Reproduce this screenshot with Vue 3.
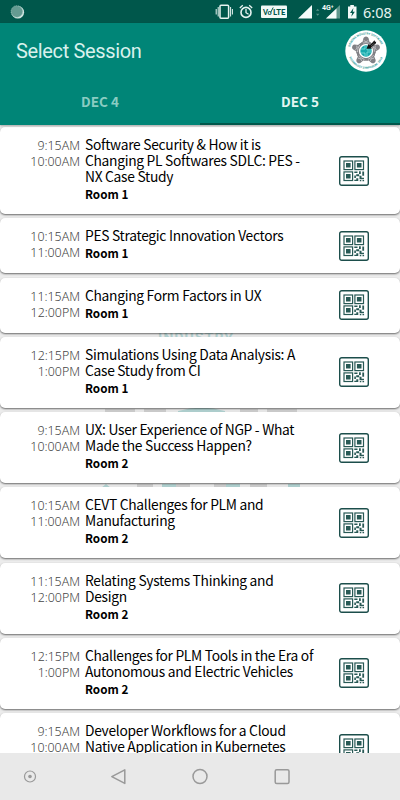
<template>
  <div class="screen">
    <div class="status-bar">
      <svg class="status-dot" width="16" height="16" viewBox="0 0 16 16">
        <circle cx="8.8" cy="8.3" r="6.3" fill="#d5e9e5" />
        <circle cx="7.9" cy="7.5" r="5.8" fill="#659b92" stroke="#9bc0b9" stroke-dasharray="1 1" />
      </svg>
      <svg class="status-icons" width="150" height="24" viewBox="210 0 150 24">
        <g fill="none" stroke="#e6f3f0">
          <rect x="220" y="5.2" width="8.6" height="13" rx="1" stroke-width="1.5" />
          <path d="M218.2 7v9.5M216.2 9v5.5M230.6 7v9.5M232.4 9v5.5" stroke-width="1" />
          <circle cx="246" cy="12.4" r="5" stroke-width="1.6" />
          <path d="M246 9v3.7l2.6 1.6M239.8 8.1l3-2.8M252.2 8.1l-3-2.8" stroke-width="1.3" />
        </g>
        <rect x="261" y="5.5" width="26" height="12.5" rx="1" fill="#f2f9f7" />
        <text x="263" y="14.8" class="volte" textLength="8.5" lengthAdjust="spacingAndGlyphs">Vo</text>
        <text x="273" y="14.8" class="volte" textLength="12.5" lengthAdjust="spacingAndGlyphs">LTE</text>
        <path d="M270.6 12.5l2.6-5" stroke="#00574b" stroke-width="1" />
        <path d="M312 5v13.5h-14z" fill="#f5fbfa" />
        <path d="M316 10.8l1.7-2 1.7 2zM316 13.7l1.7 2 1.7-2z" fill="#5a958b" />
        <path d="M340 5v13.5h-14z" fill="#5f978d" />
        <path d="M336.5 8.5v10H326z" fill="#f5fbfa" />
        <text x="322" y="9.5" class="network">4G⁺</text>
        <path d="M350.3 5h3.6v1.4h2.6v12H348v-12h2.3z" fill="#f2f9f7" />
        <path d="M353.4 8l-3.4 5h2.1l-.8 3.7 3.6-5h-2.2z" fill="#00574b" />
      </svg>
      <span class="clock">6:08</span>
    </div>

    <header class="app-bar">
      <div class="toolbar">
        <h1>Select Session</h1>
        <svg class="logo" width="42" height="42" viewBox="0 0 42 42">
          <defs>
            <path id="arcTop" d="M5 17a16.5 16.5 0 0 1 32 0" />
            <path id="arcBottom" d="M4 27a18.2 18.2 0 0 0 34 0" />
          </defs>
          <circle cx="21" cy="21" r="20.7" fill="#fff" />
          <text class="logo-text"><textPath href="#arcTop" textLength="41">SIEMENS INDUSTRY SOFTWARE</textPath></text>
          <text class="logo-text"><textPath href="#arcBottom" textLength="43">TECHNOLOGY SYMPOSIUM · 2018</textPath></text>
          <g v-for="angle in [0, 72, 144, 216, 288]" :key="angle" :transform="`rotate(${angle} 21 21)`">
            <path d="M18.5 8a2.8 2.8 0 0 1 5 0l1 4 4.2 2.6-2 1.6-5.7-2-5.7 2-2-1.6 4.2-2.6z" fill="#808085" />
            <path d="M18.7 10.5l2.3 1.2 2.3-1.2M17.3 13.2l3.7-.6 3.7.6" stroke="#d6d6d8" stroke-width=".7" fill="none" />
          </g>
          <circle cx="21" cy="21" r="7.1" fill="#fff" />
          <circle cx="21" cy="21" r="5.7" fill="#18a9ad" />
          <path d="M16 19h4v-3M22 16v4h4M16 23h4v3M22 26v-4h4" stroke="#86dfdc" stroke-width=".8" fill="none" />
          <path d="M21.5 18.8l2-4.7 1.2 1.1 4.8-5 .5 1.6 1.2-.1-.4 1.8-4.6 3.8.9 1.2z" fill="#111" />
          <path d="M25 14.5l3.4-2.8M26 16l3.4-2.8" stroke="#bbb" stroke-width=".4" />
        </svg>
      </div>
      <nav class="tabs">
        <button
          v-for="tab in tabs"
          :key="tab"
          :class="['tab', { active: tab === activeTab }]"
          @click="activeTab = tab"
        >{{ tab }}</button>
      </nav>
    </header>

    <main class="sessions">
      <svg class="watermark" width="200" height="190" viewBox="0 0 200 190">
        <defs>
          <path id="markArc" d="M20 22Q96 12 172 22" />
        </defs>
        <text class="mark-text"><textPath href="#markArc" startOffset="50%" text-anchor="middle">INDUSTRY</textPath></text>
        <path d="M5 84h30v4H5zM44 84h22v4H44zM140 84h18v4h-18zM167 84h30v4h-30z" fill="#cfcfcf" />
        <path d="M78 86q24-7 47 0v3H78z" fill="#b2d3d2" />
        <path d="M37 159h16v4H37zM72 159h18v4H72zM114 159h14v4h-14zM150 159h17v4h-17z" fill="#cfcfcf" />
        <path d="M1 163l5-4 5 4zM62 159h14v4H62zM126 159h14v4h-14zM188 159h12v4h-12z" fill="#b2d3d2" />
      </svg>
      <article v-for="(session, index) in sessions" :key="index" class="card">
        <div class="times">
          <span>{{ session.start }}</span>
          <span>{{ session.end }}</span>
        </div>
        <div class="details">
          <h2>{{ session.title }}</h2>
          <p>{{ session.room }}</p>
        </div>
        <svg class="qr" width="32" height="32" viewBox="0 0 32 32">
          <rect x="1.7" y="1.7" width="28.6" height="28.6" rx="2" fill="#fff" stroke="#1c4e4b" stroke-width="1.4" />
          <g fill="none" stroke="#285955" stroke-width="1.2">
            <rect x="6" y="6" width="8.6" height="8.6" />
            <rect x="16.9" y="6" width="8.6" height="8.6" />
            <rect x="6" y="16.9" width="8.6" height="8.6" />
          </g>
          <path d="M8 8h4.6v4.6H8zM18.9 8h4.6v4.6h-4.6zM8 18.9h4.6v4.6H8z" fill="#285955" />
          <path d="M16.3 16.5h3.2V18h-3.2zM21 16.3h1.8v2.8H21zM24.3 16.5h1.8v4.2h-1.8zM18.2 19.2h3v2h-3zM16.3 20.6h1.6v2.4h-1.6zM21.5 20.8h2v2H26v1.5h-4.5zM18.3 23.2h2v2.9h-4v-1.4h2zM21.8 25h1.5v1.2h-1.5zM24.5 25h1.6v1.2h-1.6z" fill="#285955" />
        </svg>
      </article>
    </main>

    <footer class="nav-bar">
      <svg width="400" height="47" viewBox="0 0 400 47">
        <g fill="none" stroke="#999" stroke-width="1.5">
          <circle cx="30" cy="23.5" r="5.5" stroke-width="1.2" />
          <path d="M124.8 16.8v13.6l-13-6.8z" stroke-linejoin="round" />
          <circle cx="200" cy="23.5" r="7" />
          <rect x="275.2" y="16.8" width="13.8" height="13.6" rx="1.5" />
        </g>
        <circle cx="30" cy="23.5" r="1.8" fill="#999" />
      </svg>
    </footer>
  </div>
</template>

<script setup>
import { ref } from 'vue'

const tabs = ['DEC 4', 'DEC 5']
const activeTab = ref('DEC 5')

const sessions = [
  { start: '9:15AM', end: '10:00AM', title: 'Software Security & How it is\nChanging PL Softwares SDLC: PES -\nNX Case Study', room: 'Room 1' },
  { start: '10:15AM', end: '11:00AM', title: 'PES Strategic Innovation Vectors', room: 'Room 1' },
  { start: '11:15AM', end: '12:00PM', title: 'Changing Form Factors in UX', room: 'Room 1' },
  { start: '12:15PM', end: '1:00PM', title: 'Simulations Using Data Analysis: A\nCase Study from CI', room: 'Room 1' },
  { start: '9:15AM', end: '10:00AM', title: 'UX: User Experience of NGP - What\nMade the Success Happen?', room: 'Room 2' },
  { start: '10:15AM', end: '11:00AM', title: 'CEVT Challenges for PLM and\nManufacturing', room: 'Room 2' },
  { start: '11:15AM', end: '12:00PM', title: 'Relating Systems Thinking and\nDesign', room: 'Room 2' },
  { start: '12:15PM', end: '1:00PM', title: 'Challenges for PLM Tools in the Era of\nAutonomous and Electric Vehicles', room: 'Room 2' },
  { start: '9:15AM', end: '10:00AM', title: 'Developer Workflows for a Cloud\nNative Application in Kubernetes', room: 'Room 2' }
]
</script>

<style>
body {
  margin: 0;
  overflow: hidden;
}
</style>

<style scoped>
.screen {
  width: 400px;
  height: 800px;
  display: flex;
  flex-direction: column;
  overflow: hidden;
  background: #ececec;
  font-family: "Noto Sans CJK SC", "Noto Sans", sans-serif;
}

.status-bar {
  height: 23px;
  flex: none;
  display: flex;
  align-items: center;
  background: #00574b;
  color: #e6f3f0;
}

.status-dot {
  margin-left: 9px;
}

.status-icons {
  margin-left: 185px;
}

.volte {
  font: 900 8px Lato, sans-serif;
  fill: #00574b;
}

.network {
  font: bold 7px Roboto, sans-serif;
  fill: #f5fbfa;
}

.clock {
  margin-left: 3px;
  font: 14.5px "Noto Sans", sans-serif;
}

.app-bar {
  height: 102px;
  flex: none;
  position: relative;
  z-index: 1;
  display: flex;
  flex-direction: column;
  background: #008577;
  box-shadow: 0 1px 2px rgba(0, 0, 0, 0.3);
}

.toolbar {
  height: 56px;
  display: flex;
  align-items: center;
  justify-content: space-between;
  padding: 0 13px 0 16px;
}

.toolbar h1 {
  margin: 0;
  font: 400 20px Roboto, sans-serif;
  letter-spacing: -0.35px;
  color: #d8f1ed;
}

.tabs {
  flex: 1;
  display: flex;
}

.tab {
  flex: 1;
  padding: 0;
  border: 0;
  border-bottom: 2px solid transparent;
  background: none;
  font: 700 13.5px/42px "Noto Sans CJK SC", sans-serif;
  color: #8accc2;
}

.tab.active {
  border-bottom-color: #00574b;
  color: #e3f6f3;
}

.logo-text {
  font: bold 2.8px Roboto, sans-serif;
  fill: #319b98;
}

.sessions {
  position: relative;
  flex: 1;
  min-height: 0;
  overflow: hidden;
  display: flex;
  flex-direction: column;
  gap: 4.25px;
  padding-top: 2px;
}

.watermark {
  position: absolute;
  left: 100px;
  top: 200px;
}

.mark-text {
  font: bold 14px Roboto, sans-serif;
  letter-spacing: 1px;
  fill: #b4d3d2;
}

.card {
  position: relative;
  flex: none;
  display: flex;
  box-sizing: border-box;
  padding: 9px 0 12px;
  border-radius: 5px;
  background: #fff;
  box-shadow: 0 1px 2px rgba(0, 0, 0, 0.55);
}

.times {
  width: 80px;
  display: flex;
  flex-direction: column;
  padding-top: 2px;
  text-align: right;
  font: 300 12.4px/16px "Noto Sans", sans-serif;
  color: #444;
}

.details {
  flex: 1;
  padding-left: 5px;
}

.details h2 {
  margin: 0 0 1px;
  font-size: 13.8px;
  font-weight: 400;
  line-height: 16px;
  letter-spacing: -0.29px;
  color: #000;
  white-space: pre;
}

.details p {
  margin: 0;
  font-size: 11.7px;
  font-weight: 700;
  line-height: 17px;
  color: #000;
}

.qr {
  align-self: center;
  margin: 2px 30px -1px 0;
}

.nav-bar {
  height: 47px;
  flex: none;
  position: relative;
  background: #e9e9e9;
}

.nav-bar svg {
  display: block;
}
</style>
